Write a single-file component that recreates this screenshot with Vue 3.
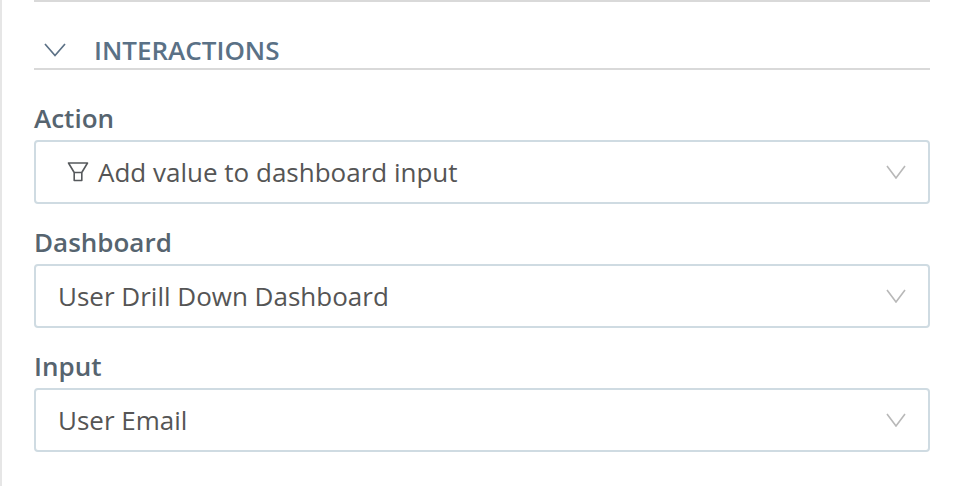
<script setup>
const fields = [
  { label: 'Action', value: 'Add value to dashboard input', icon: true },
  { label: 'Dashboard', value: 'User Drill Down Dashboard' },
  { label: 'Input', value: 'User Email' }
];
</script>

<template>
  <div class="panel">
    <div class="top-rule"></div>
    <div class="section-head">
      <svg class="head-chevron" width="22" height="14" viewBox="0 0 22 14">
        <path d="M1 1 L11 12.5 L21 1" fill="none" stroke="#5c7186" stroke-width="1.7" />
      </svg>
      <span class="section-title">INTERACTIONS</span>
    </div>
    <div class="fields">
      <div v-for="field in fields" :key="field.label" class="field">
        <div class="field-label">{{ field.label }}</div>
        <div class="select">
          <svg v-if="field.icon" class="funnel" width="22" height="20" viewBox="0 0 22 20">
            <path d="M1.5 1 H20.5 L14.8 10.5 H7.2 Z M7.2 10.5 V18.5 H14.8 V10.5" fill="none" stroke="#56595c" stroke-width="1.6" stroke-linejoin="round" />
          </svg>
          <span class="select-value">{{ field.value }}</span>
          <svg class="select-chevron" width="20" height="14" viewBox="0 0 20 14">
            <path d="M1 1 L10 13 L19 1" fill="none" stroke="#b8b8b8" stroke-width="1.6" />
          </svg>
        </div>
      </div>
    </div>
  </div>
</template>

<style>
body {
  background: #fff;
}
</style>

<style scoped>
.panel {
  box-sizing: border-box;
  width: 962px;
  height: 486px;
  padding: 0 32px 0 32px;
  border-left: 2px solid #e6e6e6;
  font-family: "Open Sans", sans-serif;
  overflow: hidden;
  background: #fff;
}

.top-rule {
  height: 2px;
  background: #d9d9d9;
}

.section-head {
  display: flex;
  align-items: center;
  height: 68px;
  border-bottom: 2px solid #d9d9d9;
  box-sizing: border-box;
  padding: 29px 0 0 10px;
}

.head-chevron {
  margin-right: 28px;
}

.section-title {
  font-size: 26px;
  font-weight: 600;
  color: #5a7186;
}

.fields {
  display: flex;
  flex-direction: column;
  margin-top: 10px;
}

.field-label {
  padding: 20px 0 4px;
  font-size: 26px;
  line-height: 36px;
  font-weight: 600;
  color: #56646f;
}

.select {
  box-sizing: border-box;
  display: flex;
  align-items: center;
  height: 64px;
  padding: 0 22px;
  border: 2px solid #cfdbe2;
  border-radius: 4px;
}

.funnel {
  margin: 0 9px 0 9px;
}

.select-value {
  flex: 1;
  font-size: 26px;
  color: #555;
}
</style>
